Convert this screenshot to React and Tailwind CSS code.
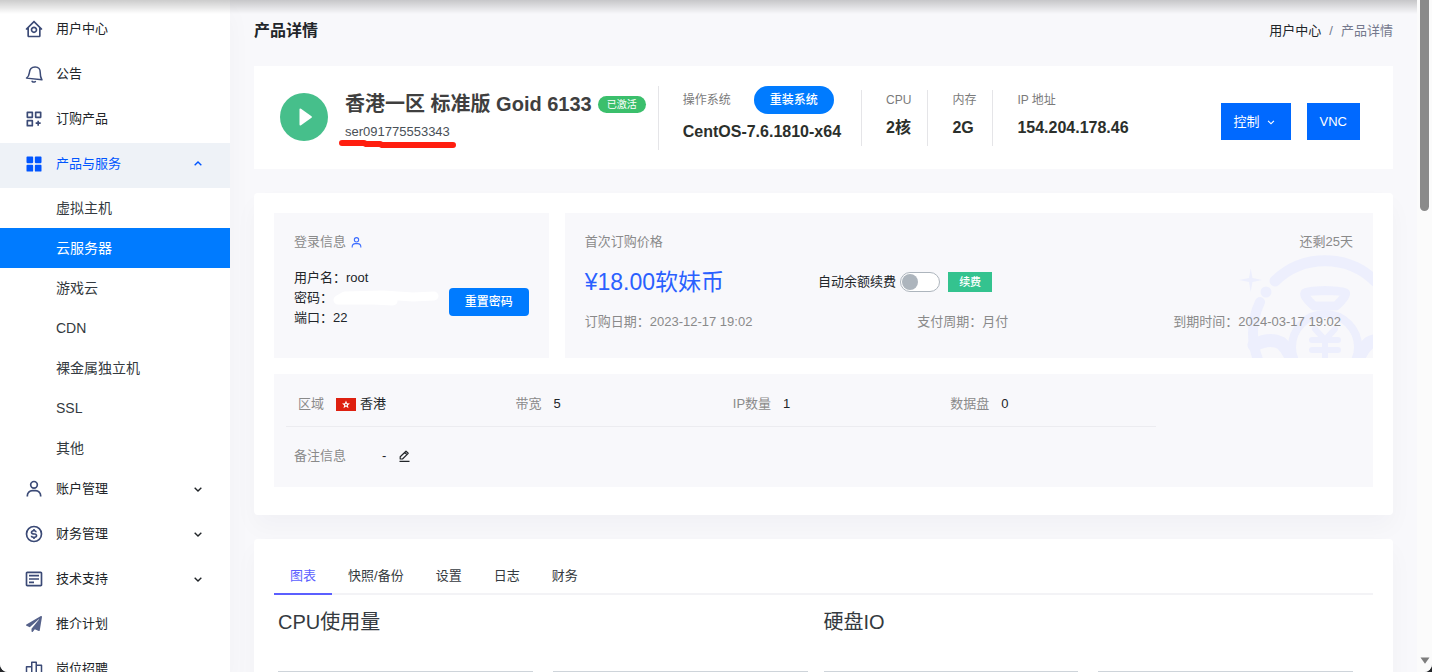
import React, { useState } from 'react';
import {
  BiHomeCircle,
  BiCustomize,
  BiSolidGridAlt,
  BiUser,
  BiDollarCircle,
  BiDetail,
  BiChevronDown,
  BiChevronUp,
} from 'react-icons/bi';
import { FaPaperPlane } from 'react-icons/fa';

const BellIcon = () => (
  <svg viewBox="0 0 24 24" className="h-[18px] w-[18px]" fill="none" stroke="currentColor" strokeWidth="2" strokeLinejoin="round" strokeLinecap="round">
    <path d="M2 17.500c2.400-1.500 3.400-3.500 3.800-7C6.200 5 9 2.500 13.400 2.500c4.400.3 7 3.200 6.900 7.500-.1 3.800.4 6.500 2.300 9.700z" />
    <path d="M9.500 21.800c1 .9 3 1.100 4.300.4" />
  </svg>
);

const BarsIcon = () => (
  <svg viewBox="0 0 24 24" className="h-[18px] w-[18px]" fill="none" stroke="currentColor" strokeWidth="2" strokeLinejoin="round">
    <path d="M9 21V3h6v18zM9 21H2V9h7M15 21h7V7h-7" />
  </svg>
);

const EditIcon = () => (
  <svg viewBox="0 0 12 12" className="h-3 w-3" fill="none" stroke="currentColor" strokeWidth="1.200" strokeLinejoin="round">
    <path d="M2.200 9V6.800L8 1.200 10.200 3.300 4.500 9zM6.800 2.500 8.900 4.600M1.500 11.300h10" />
  </svg>
);

const HongKongFlag = () => (
  <svg viewBox="0 0 20 13" className="h-[13px] w-5">
    <rect width="20" height="13" fill="#de2010" />
    <path
      d="M10 2.600 11.100 5.300 14 5.500 11.800 7.300 12.500 10.200 10 8.600 7.500 10.200 8.200 7.300 6 5.500 8.900 5.300z"
      fill="#fff"
    />
    <circle cx="10" cy="6.700" r="0.900" fill="#de2010" />
  </svg>
);

const MoneyBag = () => (
  <svg viewBox="0 0 135 105" className="absolute right-0 bottom-0 h-[105px] w-[135px]" fill="none" stroke="#edeffd" strokeLinecap="round" strokeLinejoin="round">
    <path d="M37 28A72 72 0 0 1 137 28" strokeWidth="11" />
    <path d="M22 49A72 72 0 0 0 22 111" strokeWidth="10" />
    <circle cx="28" cy="39" r="5.500" fill="#edeffd" stroke="none" />
    <path d="M12.700 15.500 14.500 25 24 27 14.500 29 12.700 39 11 29 1 27 11 25z" fill="#edeffd" stroke="none" />
    <path d="M67 40Q69 38 87 37.500 105 38 107.500 40 109 43 98 53H76Q65 43 67 40z" strokeWidth="9" />
    <circle cx="87" cy="94" r="33" strokeWidth="8" />
    <path d="M77 76 87 87 97 76M74 87h26M74 97h26M87 87v22" strokeWidth="6" />
    <path d="M16 92Q32 84 43 90 50 96 54 107M158 92Q142 84 131 90 124 96 120 107" strokeWidth="13" />
  </svg>
);

const SUB_ITEMS = ['虚拟主机', '云服务器', '游戏云', 'CDN', '裸金属独立机', 'SSL', '其他'];

const MENU = [
  { label: '用户中心', icon: <BiHomeCircle size={20} /> },
  { label: '公告', icon: <BellIcon /> },
  { label: '订购产品', icon: <BiCustomize size={20} /> },
  { label: '产品与服务', icon: <BiSolidGridAlt size={20} />, active: true, children: SUB_ITEMS },
  { label: '账户管理', icon: <BiUser size={20} />, expandable: true },
  { label: '财务管理', icon: <BiDollarCircle size={20} />, expandable: true },
  { label: '技术支持', icon: <BiDetail size={20} />, expandable: true },
  { label: '推介计划', icon: <FaPaperPlane size={16} className="text-[#56628a]" /> },
  { label: '岗位招聘', icon: <BarsIcon /> },
];

const TABS = ['图表', '快照/备份', '设置', '日志', '财务'];

const Sidebar = () => (
  <nav className="w-[230px] shrink-0 bg-white pt-2 shadow-[0_12px_24px_rgba(18,38,63,0.03)]">
    <ul>
      {MENU.map((item) => (
        <li key={item.label}>
          <a
            href="#"
            className={
              item.active
                ? 'flex h-[45px] items-center bg-[#eef2f7] px-6 pb-[3px] text-[#0055ff]'
                : 'flex h-[45px] items-center px-6 pb-[3px] text-[#212529]'
            }
          >
            <span className={item.active ? 'flex w-5 justify-center' : 'flex w-5 justify-center text-[#3b4a76]'}>
              {item.icon}
            </span>
            <span className="ml-3 flex-1">{item.label}</span>
            {item.active && <BiChevronUp size={16} />}
            {item.expandable && <BiChevronDown size={16} />}
          </a>
          {item.children && (
            <ul>
              {item.children.map((child) => (
                <li key={child}>
                  <a
                    href="#"
                    className={
                      child === '云服务器'
                        ? 'flex h-10 items-center bg-[#007bff] pl-14 text-sm text-white'
                        : 'flex h-10 items-center pl-14 text-sm text-[#343a40]'
                    }
                  >
                    {child}
                  </a>
                </li>
              ))}
            </ul>
          )}
        </li>
      ))}
    </ul>
  </nav>
);

const Spec = ({ label, value }) => (
  <div className="flex h-14 flex-col justify-between border-l border-[#e5e5e8] pr-4 pl-6">
    <span className="text-xs leading-5 text-[#7a7a7a]">{label}</span>
    <span className="text-base leading-9 font-bold text-[#2b2f2b]">{value}</span>
  </div>
);

const ServerHeader = () => (
  <section className="flex items-start bg-white pt-5 pr-[33px] pb-[19px] pl-[26px]">
    <span className="mt-[7px] flex h-12 w-12 shrink-0 items-center justify-center rounded-full bg-[#46bf8b]">
      <svg viewBox="0 0 14 18" className="ml-1 h-[18px] w-3.5" fill="#fff">
        <path d="M0.500 1.500Q0.500 0 2 0.800L12.500 8.200Q13.500 9 12.500 9.800L2 17.200Q0.500 18 0.500 16.500z" />
      </svg>
    </span>
    <div className="relative ml-[17px] pr-3">
      <div className="flex h-9 items-center gap-1.5">
        <h2 className="text-xl font-bold whitespace-nowrap text-[#3f3f3f]">香港一区 标准版 Goid 6133</h2>
        <span className="rounded-full bg-[#3bbf6c] px-[9px] text-[10px] leading-[17px] whitespace-nowrap text-white">已激活</span>
      </div>
      <p className="leading-5 text-[#495057]">ser091775553343</p>
      {/* marker stroke under the host name */}
      <svg viewBox="0 0 118 10" className="absolute top-[53px] -left-1.5 h-2.5 w-[118px]" fill="none" stroke="#ff1e0f" strokeWidth="6" strokeLinecap="round" strokeLinejoin="round">
        <path d="M3 4H25L27 5H41L43 6H114" />
      </svg>
    </div>
    <div className="h-16 border-l border-[#e5e5e8] pr-5 pl-6">
      <div className="flex items-center gap-[23px]">
        <span className="text-xs text-[#7a7a7a]">操作系统</span>
        <button type="button" className="h-7 w-20 rounded-full bg-[#007bff] text-xs font-medium text-white">重装系统</button>
      </div>
      <p className="mt-1 text-base leading-7 font-bold text-[#2b2f2b]">CentOS-7.6.1810-x64</p>
    </div>
    <div className="mt-1 flex">
      <Spec label="CPU" value="2核" />
      <Spec label="内存" value="2G" />
      <Spec label="IP 地址" value="154.204.178.46" />
    </div>
    <div className="mt-[17px] ml-auto flex gap-4 text-white">
      <button type="button" className="flex h-[37px] items-center gap-1 bg-[#0069ff] px-[13px]">
        控制 <BiChevronDown size={14} />
      </button>
      <button type="button" className="h-[37px] bg-[#0069ff] px-[13px]">VNC</button>
    </div>
  </section>
);

const LoginPanel = () => (
  <div className="flex w-1/4 shrink-0 bg-[#f8f8fb] px-5 pt-5 pb-5">
    <div className="flex-1">
      <p className="flex h-[18px] items-center gap-1 text-[#8a8a8a]">
        登录信息 <BiUser size={13} className="text-[#3b6cff]" />
      </p>
      <div className="mt-[17px] leading-5 text-[#212529]">
        <p>用户名：root</p>
        <p className="flex items-center">
          密码：
          <svg viewBox="0 0 108 18" className="h-[18px] w-[108px] shrink-0" fill="none" stroke="#fff" strokeWidth="9" strokeLinecap="round" strokeLinejoin="round">
            <path d="M5 11 12 7 50 6 80 8 101 7M5 11H40L60 12" />
          </svg>
        </p>
        <p>端口：22</p>
      </div>
    </div>
    <button type="button" className="mt-[55px] h-7 w-20 shrink-0 rounded-sm bg-[#007bff] text-xs font-medium text-white">
      重置密码
    </button>
  </div>
);

const BillingPanel = () => {
  const [autoRenew, setAutoRenew] = useState(false);

  return (
    <div className="relative h-[145px] flex-1 bg-[#f8f8fb] px-5 pt-5">
      <MoneyBag />
      <div className="relative text-[#8a8a8a]">
        <div className="flex h-[18px] items-center justify-between">
          <span>首次订购价格</span>
          <span>还剩25天</span>
        </div>
        <div className="mt-[13px] flex h-9 items-center">
          <span className="text-[23px] text-[#2a60ff]">¥18.00软妹币</span>
          <label htmlFor="auto-renew" className="ml-[94px] text-[#212529]">自动余额续费</label>
          <input
            id="auto-renew"
            type="checkbox"
            role="switch"
            checked={autoRenew}
            onChange={(e) => setAutoRenew(e.target.checked)}
            className="ml-1 h-5 w-10 appearance-none rounded-full border border-[#adb5bd] bg-white p-px before:block before:h-4 before:w-4 before:rounded-full before:bg-[#adb5bd] checked:before:ml-5"
          />
          <button type="button" className="ml-2 h-5 w-11 bg-[#34c38f] text-[11px] font-medium text-white">续费</button>
        </div>
        <div className="mt-3 flex h-5 items-center justify-between pr-3">
          <span>订购日期：2023-12-17 19:02</span>
          <span>支付周期：月付</span>
          <span>到期时间：2024-03-17 19:02</span>
        </div>
      </div>
    </div>
  );
};

const Field = ({ label, children }) => (
  <div className="flex items-center gap-3 pl-3">
    <dt className="text-[#8a8a8a]">{label}</dt>
    <dd className="flex items-center gap-1 text-[#212529]">{children}</dd>
  </div>
);

const ConfigPanel = () => (
  <div className="mt-4 bg-[#f8f8fb] pl-3">
    <dl className="grid h-[53px] w-4/5 grid-cols-4 border-b border-[#ececf0] pt-2">
      <Field label="区域"><HongKongFlag />香港</Field>
      <Field label="带宽">5</Field>
      <Field label="IP数量">1</Field>
      <Field label="数据盘">0</Field>
    </dl>
    <div className="flex h-[60px] items-center pb-0.5 pl-2">
      <span className="text-[#8a8a8a]">备注信息</span>
      <span className="ml-9 text-[#212529]">-</span>
      <button type="button" aria-label="编辑备注" className="ml-3 text-[#212529]">
        <EditIcon />
      </button>
    </div>
  </div>
);

const ChartBlock = ({ title, name }) => (
  <div className="w-1/2 pr-4">
    <h3 className="text-xl leading-[30px] text-[#343a40]">{title}</h3>
    <div className="mt-[34px] grid grid-cols-2 gap-5">
      <input type="text" aria-label="开始时间" name={`${name}-start`} className="h-9 w-full border border-[#ced4da] px-3" />
      <input type="text" aria-label="结束时间" name={`${name}-end`} className="h-9 w-full border border-[#ced4da] px-3" />
    </div>
  </div>
);

const UsageCard = () => {
  const [tab, setTab] = useState('图表');

  return (
    <section className="mt-6 rounded-sm bg-white px-5 pt-5 pb-8 shadow-[0_12px_24px_rgba(18,38,63,0.03)]">
      <div role="tablist" className="flex h-9 border-b-2 border-[#f3f3f6]">
        {TABS.map((t) => (
          <button
            key={t}
            type="button"
            role="tab"
            aria-selected={t === tab}
            onClick={() => setTab(t)}
            className={
              t === tab
                ? 'h-9 border-b-2 border-[#5b5fff] px-4 text-[#5b5fff]'
                : 'h-9 border-b-2 border-transparent px-4 text-[#343a40]'
            }
          >
            {t}
          </button>
        ))}
      </div>
      <div className="mt-3 flex px-1">
        <ChartBlock title="CPU使用量" name="cpu" />
        <ChartBlock title="硬盘IO" name="disk" />
      </div>
    </section>
  );
};

const Scrollbar = () => (
  <div className="flex w-[15px] shrink-0 flex-col items-center justify-between bg-[#fbfbfb] pb-2">
    <div className="h-[211px] w-[9px] rounded-b-full bg-[#8a8a8a]" />
    <svg viewBox="0 0 10 7" className="h-[7px] w-2.5" fill="#7d7d7d">
      <path d="M0.500 0.500h9L5 6.800z" />
    </svg>
  </div>
);

const App = () => (
  <div className="h-screen bg-[#26282b] font-['Liberation_Sans','Noto_Sans_CJK_SC',sans-serif] text-[13px] leading-5">
    <div className="relative flex h-full overflow-hidden rounded-b-lg bg-[#f8f8fb]">
      <Sidebar />
      <main className="min-w-0 flex-1 px-6">
        <header className="flex h-[66px] items-center justify-between pb-1">
          <h1 className="text-base font-bold text-[#212529]">产品详情</h1>
          <nav className="flex gap-2">
            <a href="#" className="text-[#212529]">用户中心</a>
            <span className="text-[#74788d]">/</span>
            <span className="text-[#74788d]">产品详情</span>
          </nav>
        </header>
        <ServerHeader />
        <section className="mt-6 rounded-sm bg-white px-5 pt-5 pb-7 shadow-[0_12px_24px_rgba(18,38,63,0.03)]">
          <div className="flex gap-4">
            <LoginPanel />
            <BillingPanel />
          </div>
          <ConfigPanel />
        </section>
        <UsageCard />
      </main>
      <Scrollbar />
      <div className="pointer-events-none absolute top-0 right-[15px] left-0 h-3.5 bg-linear-to-b from-black/20 to-transparent" />
    </div>
  </div>
);

export default App;
